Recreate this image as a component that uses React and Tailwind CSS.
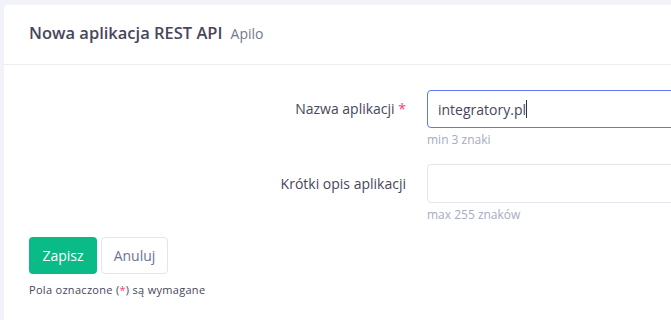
export default function App() {
  return (
    <div className="w-[671px] h-[320px] overflow-hidden bg-[#f2f3f8] pt-[5px] pl-[4px] font-['Open_Sans',sans-serif]">
      <div className="w-[900px] h-[400px] bg-white rounded-[4px]">
        <div className="h-[60px] border-b border-[#ebedf2] flex items-center pl-[25px] pb-[2px]">
          <h3 className="text-[16.5px] font-semibold text-[#48465b]">Nowa aplikacja REST API</h3>
          <span className="ml-[8px] text-[14px] text-[#74788d]">Apilo</span>
        </div>
        <div className="px-[25px] pt-[25px]">
          <div className="flex">
            <label className="w-[398px] shrink-0 pr-[21px] text-right text-[14px] text-[#48465b] h-[38px] leading-[38px]">
              Nazwa aplikacji <span className="text-[#fd397a]">*</span>
            </label>
            <div className="w-[460px] shrink-0">
              <div className="h-[38px] border border-[#5d78ff] rounded-[4px] flex items-center px-[10px] text-[14px] text-[#48465b]">
                integratory.pl<span className="w-px h-[18px] bg-[#333]"></span>
              </div>
              <div className="mt-[3px] text-[12px] text-[#a7abc3]">min 3 znaki</div>
            </div>
          </div>
          <div className="flex mt-[15px]">
            <label className="w-[398px] shrink-0 pr-[21px] text-right text-[14px] text-[#48465b] h-[39px] leading-[39px]">
              Krótki opis aplikacji
            </label>
            <div className="w-[460px] shrink-0">
              <div className="h-[39px] border border-[#e2e5ec] rounded-[4px]"></div>
              <div className="mt-[3px] text-[12px] text-[#a7abc3]">max 255 znaków</div>
            </div>
          </div>
          <div className="flex gap-[4px] mt-[13px]">
            <button className="h-[37px] w-[68px] rounded-[4px] bg-[#0abb87] text-white text-[14px]">Zapisz</button>
            <button className="h-[37px] w-[67px] rounded-[4px] border border-[#e2e5ec] bg-white text-[#6c7293] text-[14px]">Anuluj</button>
          </div>
          <p className="mt-[8px] text-[11px] tracking-[0.3px] text-[#48465b]">
            Pola oznaczone (<span className="text-[#fd397a]">*</span>) są wymagane
          </p>
        </div>
      </div>
    </div>
  );
}
